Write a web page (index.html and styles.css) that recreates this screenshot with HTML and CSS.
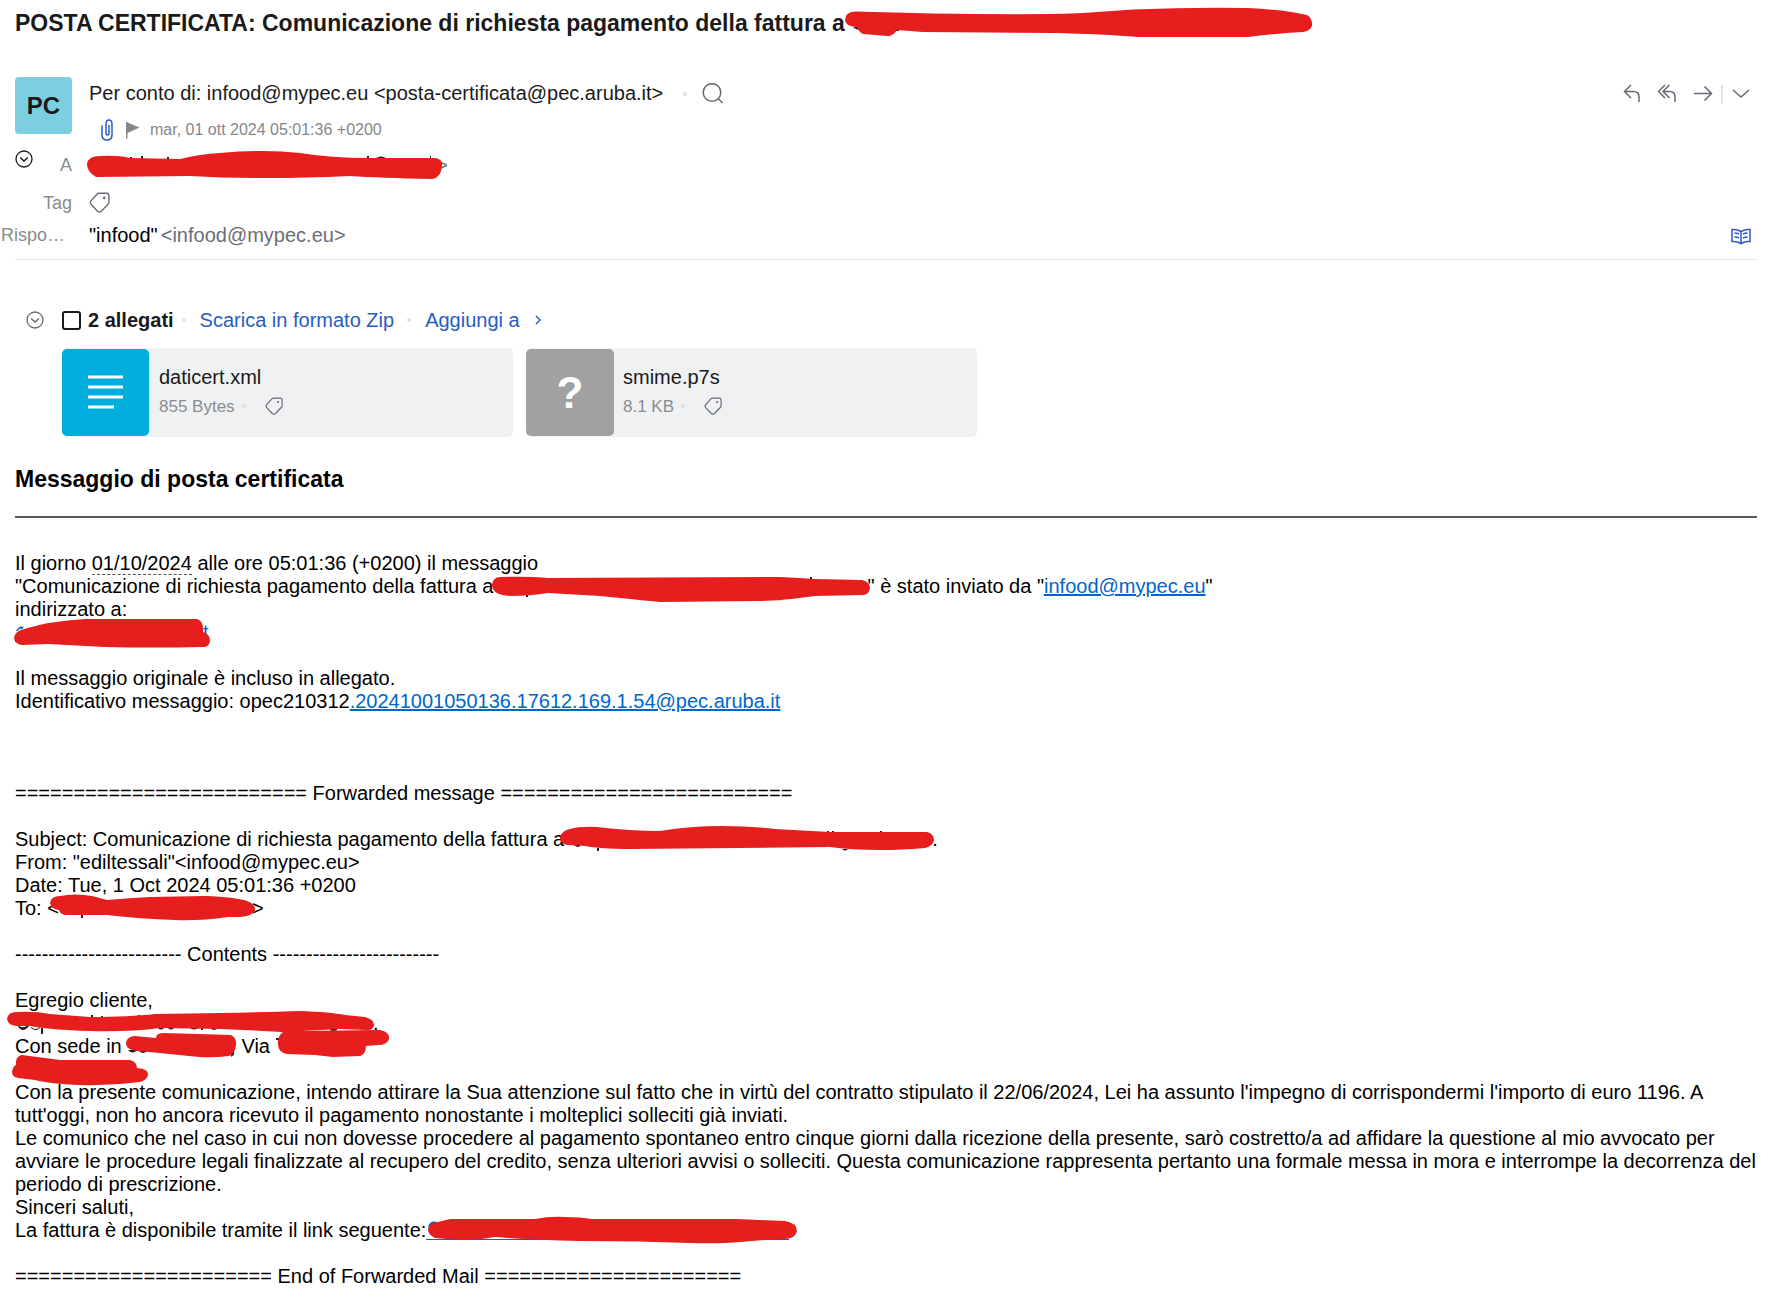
FILE: index.html
```
<!DOCTYPE html>
<html lang="it">
<head>
<meta charset="utf-8">
<title>POSTA CERTIFICATA</title>
<link rel="stylesheet" href="styles.css">
</head>
<body>
<svg class="defs" width="0" height="0" aria-hidden="true">
  <symbol id="tag" viewBox="0 0 20 20"><path d="M9.500 1.200h7.300q2.200 0 2.200 2.200v6.200q0 1-.7 1.800l-6.600 6.900q-1.900 1.400-3.600 0L1.900 11.700q-1.300-1.600 0-3.300l5.700-6.300q.8-.9 1.900-.9z" fill="none" stroke="currentColor" stroke-width="1.300"/><circle cx="14.500" cy="5.600" r="1.200" fill="currentColor" stroke="none"/></symbol>
  <symbol id="collapse" viewBox="0 0 18 18"><circle cx="9" cy="9" r="8" fill="none" stroke="currentColor" stroke-width="1.300"/><path d="M5.200 7.500L9 11l3.800-3.500" fill="none" stroke="currentColor" stroke-width="1.500"/></symbol>
</svg>

<header class="subject">
  <h1>POSTA CERTIFICATA: Comunicazione di richiesta pagamento della fattura a <span class="redact redact-title"><svg viewBox="848 8 1 1"><path class="ink" d="M850 27h8v3q-5 0-8-3zM893 29h3v2h-3z"/><path d="M842 20Q842 12 852 11.500L930 13.500Q1040 15 1080 13L1130 9.500Q1190 7 1245 8Q1285 10 1304 15Q1310 19 1309 26Q1307 31 1300 32Q1275 33 1245 37L1135 37Q1100 34 1050 33L920 32L894 30Q890 36 885 36L860 34Q856 32 854 27Q843 27 842 20Z"/></svg></span></h1>
</header>

<section class="envelope">
  <div class="side">
    <div class="avatar">PC</div>
    <button class="icon toggle" aria-label="Dettagli"><svg width="18" height="18"><use href="#collapse"/></svg></button>
  </div>
  <div class="who">
    <div class="sender">
      <span>Per conto di: infood@mypec.eu &lt;posta-certificata@pec.aruba.it&gt;</span>
      <i class="dot"></i>
      <button class="icon" aria-label="Cerca"><svg width="22" height="22" viewBox="0 0 22 22"><circle cx="10" cy="9.500" r="8.800"/><path d="M16 15.500l4.500 4.500"/></svg></button>
    </div>
    <div class="date">
      <svg class="clip" width="12" height="22" viewBox="0 0 12 22"><path d="M1 6.500v9.500q0 5 5 5t5-5V5q0-4-3-4T5 5v9q0 2 1.500 2T8 14V6"/></svg>
      <svg class="flag" width="14" height="18" viewBox="0 0 14 18"><path d="M0 1h1.500v16.500H0zM1.500 1.500L13.500 6.500 1.500 12z"/></svg>
      <span>mar, 01 ott 2024 05:01:36 +0200</span>
    </div>
  </div>
  <div class="actions">
    <button class="icon" aria-label="Rispondi"><svg width="18" height="20" viewBox="0 0 18 20"><path d="M8 1L1.500 7.500 8 14M1.500 7.500h9Q16 7.500 16 13v5"/></svg></button>
    <button class="icon" aria-label="Rispondi a tutti"><svg width="20" height="20" viewBox="0 0 20 20"><path d="M8 1L1.500 7.500 8 14M12.500 1L6 7.500l6.500 6.500M6 7.500h7q5 0 5 5.500v5"/></svg></button>
    <button class="icon" aria-label="Inoltra"><svg width="20" height="20" viewBox="0 0 20 20"><path d="M1 9.500h17.500M11.500 2.500l7 7-7 7"/></svg></button>
    <i class="rule"></i>
    <button class="icon" aria-label="Altro"><svg width="18" height="20" viewBox="0 0 18 20"><path d="M1 6l8 7 8-7"/></svg></button>
  </div>
</section>

<dl class="fields">
  <dt>A</dt>
  <dd><span class="redact redact-rcpt"><svg viewBox="89 154 1 1"><path class="ink" d="M130 157h2v3h-2zM141 156h2v3h-2zM167 157h2v3h-2zM337 157h2v3h-2zM367 156h2v3h-2zM376 158q5-3 10 0v2h-10zM430 156h1v2h-1z"/><path d="M87 164Q88 156 100 156Q118 155 130 158L180 159Q200 154 220 153Q265 149 300 153Q330 158 370 158L435 158Q443 159 442 166Q441 178 432 179Q380 178 350 176Q260 180 190 176L96 177Q87 172 87 164Z"/></svg></span><span class="muted">&gt;</span></dd>
  <dt>Tag</dt>
  <dd><button class="icon" aria-label="Aggiungi tag"><svg width="21" height="21"><use href="#tag"/></svg></button></dd>
  <dt class="long">Rispo…</dt>
  <dd class="reply"><span>"infood"</span><span class="muted">&lt;infood@mypec.eu&gt;</span>
    <button class="icon book" aria-label="Modalità lettura"><svg width="20" height="17" viewBox="0 0 20 17"><path d="M10 3.500Q6 1 1 1.500V13.500Q6 13 10 15.500Q14 13 19 13.500V1.500Q14 1 10 3.500V15.500M3.500 5q2.500 0 4.500 1M3.500 9q2.500 0 4.500 1M16.500 5q-2.500 0-4.500 1M16.500 9q-2.500 0-4.500 1"/></svg></button></dd>
</dl>

<section class="attachments">
  <div class="attbar">
    <button class="icon fold" aria-label="Comprimi"><svg width="18" height="18"><use href="#collapse"/></svg></button>
    <input type="checkbox" id="all"><label for="all">2 allegati</label>
    <i class="dot"></i>
    <a href="#zip">Scarica in formato Zip</a>
    <i class="dot"></i>
    <a href="#add">Aggiungi a</a>
    <svg class="more" width="6" height="10" viewBox="0 0 6 10"><path d="M1 1l4 4-4 4"/></svg>
  </div>
  <div class="cards">
    <article class="card">
      <div class="thumb thumb-doc"><svg width="35" height="36" viewBox="0 0 35 36"><path d="M0 2h35M0 12h35M0 22h35M0 32h26"/></svg></div>
      <div class="info">
        <div class="name">daticert.xml</div>
        <div class="meta"><span>855 Bytes</span><i class="dot"></i><button class="icon" aria-label="Tag"><svg width="18" height="18"><use href="#tag"/></svg></button></div>
      </div>
    </article>
    <article class="card">
      <div class="thumb">?</div>
      <div class="info">
        <div class="name">smime.p7s</div>
        <div class="meta"><span>8.1 KB</span><i class="dot"></i><button class="icon" aria-label="Tag"><svg width="18" height="18"><use href="#tag"/></svg></button></div>
      </div>
    </article>
  </div>
</section>

<main class="message">
  <h3>Messaggio di posta certificata</h3>
  <hr>
  <p>Il giorno <span class="when">01/10/2024</span> alle ore 05:01:36 (+0200) il messaggio<br>
  "Comunicazione di richiesta pagamento della fattura a<span class="redact redact-quote"><svg viewBox="494 575 1 1"><path class="ink" d="M526 594h2v3h-2zM810 577h2v3h-2z"/><path d="M492 585Q493 577 500 577Q530 576 548 578L780 577Q800 578 815 579L862 580Q870 582 870 588Q869 594 864 595L815 596Q780 601 760 601L660 602Q620 598 600 596L548 593Q530 596 510 596Q492 595 492 585Z"/></svg></span>" è stato inviato da "<a href="mailto:infood@mypec.eu">infood@mypec.eu</a>"<br>
  indirizzato a:<br>
  <span class="redact redact-addr"><svg viewBox="15 621 1 1"><path class="ink-link" d="M16 631q3-6 8-4l-2 2q-4-1-4 2zM15 640h3v2h-3z"/><path d="M14 638Q15 631 24 629Q50 621 85 619L197 619Q204 621 203 632Q210 634 210 641Q209 647 203 647Q150 648 105 647L48 644L22 645Q15 644 14 638Z"/></svg></span><a href="#to">t</a></p>
  <p>Il messaggio originale è incluso in allegato.<br>
  Identificativo messaggio: opec210312<a href="#id">.20241001050136.17612.169.1.54@pec.aruba.it</a></p>
  <p class="forward">========================= Forwarded message =========================</p>
  <p>Subject: Comunicazione di richiesta pagamento della fattura a<span class="redact redact-subj"><svg viewBox="564 828 1 1"><path class="ink" d="M574 845h7q-3 4-7 0zM597 848h2v3h-2zM827 831h2v3h-2zM832 831h2v3h-2zM880 831h2v3h-2zM842 849h6q-3 3-6 0z"/><path d="M560 838Q561 831 570 829Q580 826 597 827Q630 831 660 831Q690 826 722 826Q750 826 775 829L830 832L927 832Q934 834 934 840Q933 846 925 848Q900 850 880 850Q850 850 830 847L630 849Q600 849 585 846L568 845Q560 844 560 838Z"/></svg></span>.<br>
  From: "ediltessali"&lt;infood@mypec.eu&gt;<br>
  Date: Tue, 1 Oct 2024 05:01:36 +0200<br>
  To: &lt;<span class="redact redact-to"><svg viewBox="59 897 1 1"><path class="ink" d="M81 914h2v4h-2z"/><path d="M50 903Q51 896 60 896Q75 893 92 896L107 900Q130 898 150 897L205 896Q235 897 247 901Q256 904 255 911Q252 916 240 917L228 917Q200 921 175 920Q140 919 107 915L65 915Q60 914 59 910Q51 909 50 903Z"/></svg></span>&gt;</p>
  <p>------------------------- Contents -------------------------</p>
  <p>Egregio cliente,<br>
  <span class="redact redact-name"><svg viewBox="15 1012 1 1"><path class="ink" d="M17 1025h2q1 4 8 1h2q-3 4-6 4t-6-5zM31 1027q5 4 9 0v1q-4 4-9 0zM41 1028h2v6h-2zM91 1015h2v4h-2zM101 1016h2v3h-2zM138 1015h2v3h-2zM158 1028h6q-3 3-6 0zM168 1028h6q-3 3-6 0zM190 1028h8q-4 3-8 0zM201 1028h2v2h-2zM210 1028h8q-4 4-8 0zM330 1029h7v1q-4 2-7 0z"/><path d="M7 1019Q8 1012 16 1012Q35 1011 50 1014L90 1017Q130 1017 155 1014L220 1013Q270 1012 300 1011Q330 1012 345 1015L365 1017Q375 1020 374 1026Q372 1031 366 1030L340 1029L282 1032Q250 1030 220 1029L160 1028Q130 1032 90 1031Q50 1030 30 1026L16 1026Q8 1025 7 1019Z"/></svg></span>.<br>
  Con sede in <span class="redact redact-city"><svg viewBox="128 1035 1 1"><path class="ink" d="M129 1050h9q-4 5-9 0zM140 1051h8q-4 4-8 0zM232 1052h3q0 3-3 5z"/><path d="M127 1044Q127 1037 135 1036L157 1038Q157 1033 165 1033L232 1035Q238 1038 237 1045Q236 1054 230 1056Q215 1058 200 1057L150 1052L138 1051Q128 1050 127 1044Z"/></svg></span>, Via <span class="redact redact-street"><svg viewBox="276 1035 1 1"><path class="ink" d="M276 1038h4v2h-4z"/><path d="M278 1045Q277 1036 283 1032Q290 1029 300 1031L380 1030Q390 1032 389 1039Q387 1045 378 1045L366 1046Q366 1054 360 1056L333 1057L315 1055L287 1054Q279 1053 278 1045Z"/></svg></span><br>
  <span class="redact redact-code"><svg viewBox="15 1058 1 1"><path d="M12 1072Q13 1066 16 1065Q15 1056 22 1055L60 1060L130 1060Q137 1062 137 1068Q149 1069 148 1075Q147 1080 140 1082Q110 1086 80 1085Q50 1084 35 1080L18 1078Q12 1077 12 1072Z"/></svg></span><br>
  Con la presente comunicazione, intendo attirare la Sua attenzione sul fatto che in virtù del contratto stipulato il 22/06/2024, Lei ha assunto l'impegno di corrispondermi l'importo di euro 1196. A tutt'oggi, non ho ancora ricevuto il pagamento nonostante i molteplici solleciti già inviati.<br>
  Le comunico che nel caso in cui non dovesse procedere al pagamento spontaneo entro cinque giorni dalla ricezione della presente, sarò costretto/a ad affidare la questione al mio avvocato per avviare le procedure legali finalizzate al recupero del credito, senza ulteriori avvisi o solleciti. Questa comunicazione rappresenta pertanto una formale messa in mora e interrompe la decorrenza del periodo di prescrizione.<br>
  Sinceri saluti,<br>
  La fattura è disponibile tramite il link seguente:<a class="redact redact-link" href="#invoice" aria-label="Fattura"><svg viewBox="426 1219 1 1"><path class="ink-link" d="M426 1239h363v1H426zM428 1227q2-7 9-5v4z"/><path d="M428 1229Q429 1223 438 1222L450 1219L535 1219Q550 1216 565 1217Q580 1217 592 1219L735 1219Q760 1220 785 1221Q797 1223 797 1231Q796 1238 785 1239Q760 1240 740 1242Q720 1244 690 1243Q640 1241 580 1241Q530 1240 495 1237Q480 1240 460 1240L435 1238Q428 1235 428 1229Z"/></svg></a></p>
  <p>====================== End of Forwarded Mail ======================</p>
</main>
</body>
</html>
```
FILE: styles.css
```
* { box-sizing: border-box; }

body {
  margin: 0;
  background: #fff;
  color: #000;
  font: 20px/23px "Liberation Sans", Arial, sans-serif;
}

h1, h3, p, dl, dd { margin: 0; }

.defs { position: absolute; }

svg { display: block; fill: none; stroke: currentColor; stroke-width: 1.5; }

.icon {
  display: block;
  flex: none;
  padding: 0;
  border: 0;
  background: none;
  color: #666a73;
}

.dot {
  flex: none;
  width: 4px;
  height: 4px;
  border-radius: 50%;
  background: #e0e1e3;
}

.muted { color: #6b6e76; }

/* Marker strokes lie over the text they hide */
.redact {
  display: inline-block;
  position: relative;
  height: 23px;
  vertical-align: top;
}
.redact svg {
  position: absolute;
  top: 0;
  left: 0;
  width: 1px;
  height: 1px;
  overflow: visible;
  fill: #e61e1e;
  stroke: none;
}
.redact .ink { fill: #222; }
.redact .ink-link { fill: #0066cc; }
.redact-title { width: 464px; }
.redact-rcpt { width: 347px; }
.redact-quote { width: 374px; }
.redact-addr { width: 188px; }
.redact-subj { width: 368px; }
.redact-to { width: 193px; }
.redact-name { width: 358px; }
.redact-city { width: 103px; }
.redact-street { width: 112px; }
.redact-code { width: 130px; }
.redact-link { width: 363px; }

.subject { padding: 8px 15px 0; }
.subject h1 { font-size: 23px; line-height: 30px; color: #1a1a1a; }

.envelope {
  display: flex;
  gap: 17px;
  padding: 39px 20px 0 15px;
  height: 116px;
}
.side { width: 57px; }
.avatar {
  height: 57px;
  border-radius: 4px;
  background: #7bcfe0;
  color: #1a1a1a;
  font-size: 24px;
  font-weight: bold;
  line-height: 57px;
  text-align: center;
}
.toggle { margin-top: 16px; color: #1a1a1a; }
.who { flex: 1; padding-top: 5px; }
.sender { display: flex; align-items: center; height: 23px; color: #1a1a1a; }
.sender .dot { margin: 0 15px 0 20px; }
.date {
  display: flex;
  align-items: center;
  height: 20px;
  margin-top: 15px;
  padding-left: 12px;
  color: #85878b;
  font-size: 16px;
  line-height: 20px;
}
.clip { color: #2a5cc4; margin-right: 13px; }
.flag { fill: #85878b; stroke: none; margin-right: 10px; }
.actions { display: flex; align-items: center; height: 20px; margin-top: 7px; }
.actions .icon { margin-left: 16px; }
.actions .icon:first-child { margin-left: 0; }
.rule { width: 2px; height: 19px; margin-left: 8px; background: #e2e3e7; }
.actions .rule + .icon { margin-left: 9px; }

.fields {
  display: grid;
  grid-template-columns: 72px 1fr;
  grid-template-rows: 38px 32px 23px;
  column-gap: 17px;
  margin-right: 13px;
}
.fields dt { color: #8a8c90; font-size: 18px; text-align: right; }
.fields .long { padding-left: 1px; text-align: left; }
.reply { display: flex; gap: 3px; }
.book { margin: 1px 6px 0 auto; color: #2a5cc4; }

.attachments {
  margin: 12px 13px 0 15px;
  padding-top: 48px;
  border-top: 1px solid #e2e2e2;
}
.attbar { display: flex; align-items: center; height: 24px; margin-left: 11px; }
.attbar a { color: #2a5cc4; text-decoration: none; }
.attbar input {
  appearance: none;
  width: 19px;
  height: 19px;
  margin: 0 7px 0 18px;
  border: 2px solid #1a1a1a;
  border-radius: 3px;
}
.attbar label { font-weight: bold; color: #1a1a1a; }
.attbar .dot { margin: 0 14px 0 8px; }
.attbar a + .dot { margin-left: 13px; }
.more { margin-left: 15px; color: #2a5cc4; }

.cards { display: flex; gap: 13px; margin: 16px 0 0 47px; }
.card {
  display: flex;
  width: 451px;
  height: 89px;
  padding: 1px 0;
  border-radius: 5px;
  background: #f0f1f3;
}
.thumb {
  display: flex;
  align-items: center;
  justify-content: center;
  width: 88px;
  border-radius: 5px;
  background: #a1a1a1;
  color: #fff;
  font-size: 44px;
  font-weight: bold;
}
.thumb-doc { width: 87px; margin-right: 1px; background: #00addc; }
.thumb-doc svg { stroke-width: 3; }
.info { padding: 17px 0 0 9px; }
.name { color: #1a1a1a; }
.meta {
  display: flex;
  align-items: center;
  height: 20px;
  margin-top: 7px;
  color: #8a8c90;
  font-size: 17px;
}
.meta .dot { margin: 0 19px 0 7px; }

.message { padding: 29px 13px 22px 15px; }
.message h3 { font-size: 23px; line-height: 26px; }
.message hr { height: 2px; margin: 24px 0 34px; border: 0; background: #5a5a5a; }
.message p { margin-bottom: 23px; }
.message .forward { padding-top: 46px; }
.message a { color: #0066cc; }
.when { border-bottom: 1px dashed #555; }
```
